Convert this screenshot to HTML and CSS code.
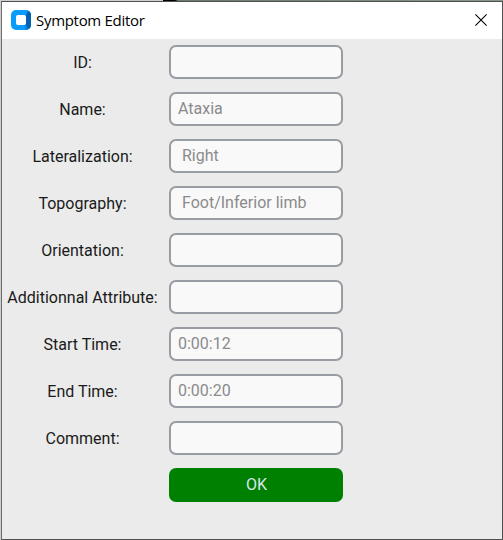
FILE: index.html
```html
<!DOCTYPE html>
<html lang="en">
<head>
<meta charset="utf-8">
<title>Symptom Editor</title>
<link rel="stylesheet" href="styles.css">
</head>
<body>
<div class="desktop">
  <main class="window">
    <header class="titlebar">
      <svg class="logo" viewBox="0 0 20 20" width="20" height="20">
        <rect width="20" height="20" rx="5" fill="#0a9cfc"/>
        <path d="M15 5 17 .8Q20 2 20 5V15Q20 18 17 19.2L15 15Z" fill="#0560b0"/>
        <path d="M14.5 15 17 19.3Q16 20 15 20L13.500 15Z" fill="#0a7cd6"/>
        <rect x="5" y="5" width="10" height="10" rx="2" fill="#fff"/>
      </svg>
      <h1 class="title">Symptom Editor</h1>
      <svg class="close" viewBox="0 0 12 12" width="12" height="12">
        <path d="M.4.4 11.6 11.6M11.6.4.4 11.6" stroke="#000" stroke-width="1.1"/>
      </svg>
    </header>
    <form class="form">
      <label class="label" for="id">ID:</label><input class="field" id="id">
      <label class="label" for="name">Name:</label><input class="field" id="name" placeholder="Ataxia">
      <label class="label" for="lat">Lateralization:</label><input class="field indented" id="lat" placeholder="Right">
      <label class="label" for="topo">Topography:</label><input class="field indented" id="topo" placeholder="Foot/Inferior limb">
      <label class="label" for="orient">Orientation:</label><input class="field" id="orient">
      <label class="label" for="attr">Additionnal Attribute:</label><input class="field" id="attr">
      <label class="label" for="start">Start Time:</label><input class="field" id="start" placeholder="0:00:12">
      <label class="label" for="end">End Time:</label><input class="field" id="end" placeholder="0:00:20">
      <label class="label" for="comment">Comment:</label><input class="field" id="comment">
      <button class="ok" type="button">OK</button>
    </form>
  </main>
</div>
</body>
</html>
```
FILE: styles.css
```css
* { box-sizing: border-box; }
body { margin: 0; font-family: Roboto, "Liberation Sans", sans-serif; }
.desktop {
  width: 503px;
  height: 540px;
  padding: 1px 0 0 1px;
  background: linear-gradient(90deg, #cfcfcf 163px, #000 163px, #000 175px, #6c7a6e 178px, #8a988c);
}
.window {
  width: 502px;
  height: 539px;
  border: 1px solid #505050;
  border-left-color: #6b6b6b;
  background: #ebebeb;
}
.titlebar {
  display: flex;
  align-items: center;
  height: 37px;
  padding: 0 15px 0 9px;
  background: #fff;
}
.logo { margin-top: -1px; }
.title {
  flex: 1;
  margin: -2px 0 0 5px;
  font: 400 15px/20px "Open Sans", "Noto Sans", sans-serif;
  letter-spacing: -0.3px;
  color: #000;
}
.close { margin-top: -1px; }
.form {
  display: grid;
  grid-template-columns: 151px 174px;
  grid-auto-rows: 34px;
  gap: 13px 11px;
  padding: 6px 0 0 5px;
}
.label {
  font-size: 16px;
  line-height: 36px;
  text-align: center;
  white-space: nowrap;
  color: #1a1a1a;
}
.field {
  width: 174px;
  height: 34px;
  padding: 0 7px 2px;
  border: 2px solid #979da2;
  border-radius: 7px;
  background: #f9f9fa;
  font: 16px Roboto, "Liberation Sans", sans-serif;
}
.field.indented { padding-left: 11px; }
.field::placeholder { color: #8b8b8b; opacity: 1; }
.ok {
  grid-column: 2;
  padding: 0 0 1px 1px;
  border: 0;
  border-radius: 7px;
  background: #008000;
  color: #dce4ee;
  font: 16px Roboto, "Liberation Sans", sans-serif;
}
```
